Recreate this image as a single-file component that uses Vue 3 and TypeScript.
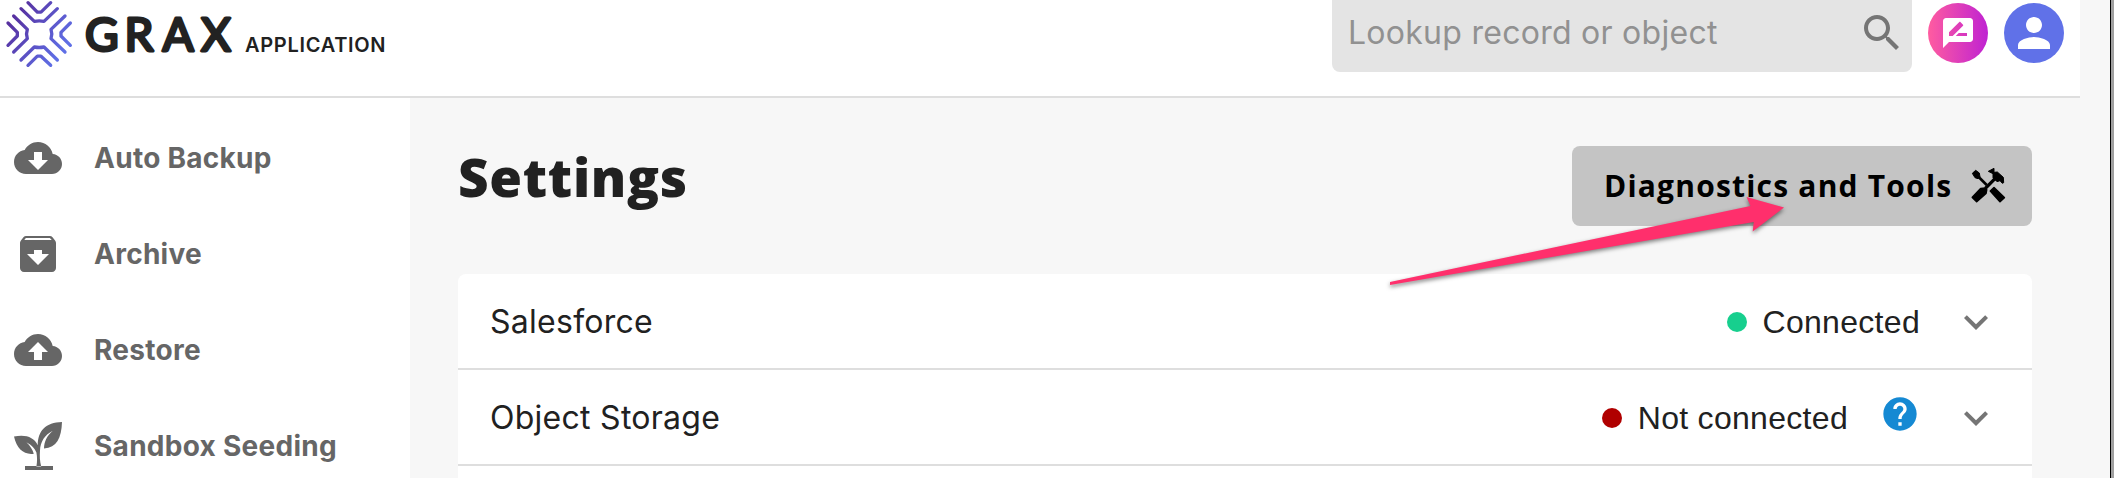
<script setup lang="ts">
interface NavItem {
  label: string
  icon: string
}
interface SettingRow {
  name: string
  status: string
  ok: boolean
  help: boolean
}

const CLOUD = 'M19.35 10.04C18.67 6.59 15.64 4 12 4 9.11 4 6.6 5.64 5.35 8.04 2.34 8.36 0 10.91 0 14c0 3.31 2.69 6 6 6h13c2.76 0 5-2.24 5-5 0-2.64-2.05-4.78-4.65-4.96z'

const navItems: NavItem[] = [
  { label: 'Auto Backup', icon: CLOUD + 'M12 18l-5-5h3V9h4v4h3l-5 5z' },
  {
    label: 'Archive',
    icon: 'M20.54 5.23l-1.39-1.68C18.88 3.21 18.47 3 18 3H6c-.47 0-.88.21-1.16.55L3.46 5.23C3.17 5.57 3 6.02 3 6.5V19c0 1.1.9 2 2 2h14c1.1 0 2-.9 2-2V6.5c0-.48-.17-.93-.46-1.27zM12 17.5L6.5 12H10v-2h4v2h3.5L12 17.5zM5.12 5l.81-1h12l.94 1H5.12z',
  },
  { label: 'Restore', icon: CLOUD + 'M12 8l5 5h-3v4h-4v-4H7l5-5z' },
  {
    label: 'Sandbox Seeding',
    icon: 'M5.5 22h14v2h-14zM11.2 22.2C11.7 19.5 11.6 17.3 11.2 15.2 10.3 13.2 9 11.6 6.2 10.1 8.2 12 9.3 13.8 9.9 15.9 5 16.6 1.4 13.5 0 7.3 5.8 6.1 10 7.6 11.9 11.6 11.8 4.6 15.8 .1 24 0 23.7 8.1 21.4 12.7 15 13.3 15.1 9.8 16.4 7 19.4 4.4 15.4 6.4 13.2 9.8 13 14.3 12.8 17.2 12.9 19.7 13.6 22.2z',
  },
]

const rows: SettingRow[] = [
  { name: 'Salesforce', status: 'Connected', ok: true, help: false },
  { name: 'Object Storage', status: 'Not connected', ok: false, help: true },
]
</script>

<template>
  <div class="window">
    <div class="app">
      <header class="topbar">
        <div class="brand">
          <svg class="mark" viewBox="0 0 240 225" fill="none" stroke="url(#brand-grad)" stroke-width="10" stroke-linecap="round" stroke-linejoin="round">
            <defs>
              <linearGradient id="brand-grad" gradientUnits="userSpaceOnUse" x1="40" y1="50" x2="190" y2="150">
                <stop offset="0" stop-color="#57309f" />
                <stop offset="1" stop-color="#5f6fe6" />
              </linearGradient>
            </defs>
            <path d="M84 8L112 36.500H123L152 8M63 26L103 64Q118 61 132 64L172 26" />
            <path d="M84 196L112 168.500H123L152 196M63 180L103 141Q118 144 132 141L172 180" />
            <path d="M24 69L52 97V108L24 136M41 48L82 88Q77 102 82 116L41 156" />
            <path d="M211 69L183 97V108L211 136M195 48L153 88Q158 102 153 116L195 156" />
          </svg>
          <svg class="wordmark" viewBox="80 0 160 75">
            <text x="85 124.500 162.500 201" y="51">GRAX</text>
          </svg>
          <span class="product">APPLICATION</span>
        </div>
        <div class="tools">
          <div class="search">
            <span class="placeholder">Lookup record or object</span>
            <svg class="i48" viewBox="0 0 24 24" fill="#757575"><path d="M15.500 14h-.79l-.28-.27C15.410 12.590 16 11.110 16 9.500 16 5.910 13.090 3 9.500 3S3 5.910 3 9.500 5.910 16 9.500 16c1.610 0 3.090-.59 4.230-1.570l.27.28v.79l5 4.990L20.490 19l-4.990-5zm-6 0C7.010 14 5 11.990 5 9.500S7.010 5 9.500 5 14 7.010 14 9.500 11.990 14 9.500 14z" /></svg>
          </div>
          <div class="round feedback">
            <svg class="i36" viewBox="0 0 24 24" fill="#fff"><path d="M20 2H4c-1.100 0-1.990.9-1.990 2L2 22l4-4h14c1.100 0 2-.9 2-2V4c0-1.100-.9-2-2-2zM6 14v-2.470l6.880-6.880c.2-.2.510-.2.710 0l1.770 1.770c.2.2.2.510 0 .710L8.470 14H6zm12 0h-7.500l2-2H18v2z" /></svg>
          </div>
          <div class="round account">
            <svg class="i48" viewBox="0 0 24 24" fill="#fff"><path d="M12 12c2.210 0 4-1.790 4-4s-1.790-4-4-4-4 1.790-4 4 1.790 4 4 4zm0 2c-2.670 0-8 1.340-8 4v2h16v-2c0-2.660-5.330-4-8-4z" /></svg>
          </div>
        </div>
      </header>

      <div class="body">
        <nav class="sidebar">
          <a v-for="item in navItems" :key="item.label" class="nav-item">
            <svg class="i48" viewBox="0 0 24 24" fill="#666"><path fill-rule="evenodd" :d="item.icon" /></svg>
            <span>{{ item.label }}</span>
          </a>
        </nav>

        <main class="content">
          <div class="heading">
            <h1>Settings</h1>
            <button class="diag" type="button">
              <span>Diagnostics and Tools</span>
              <svg class="i36" viewBox="30 36 108 108" fill="#000" stroke="#000" stroke-linejoin="round">
                <path stroke-width="3" d="M37 55L47 46L58 54L60 66L54 71L45 68Z" />
                <path stroke-width="8" d="M56 66L80 90" />
                <path stroke-width="10" d="M76 100L108 68" />
                <path stroke-width="5" d="M37 127L62 101L76 99L80 104L78 115L50 140Z" />
                <path stroke-width="5" d="M91 108L102 98L133 128L120 140Z" />
                <path stroke-width="3" d="M85 49L102 40V52L112 51L130 67L131 83L127 85L120 77L111 80L99 68V56Z" />
              </svg>
            </button>
          </div>

          <section class="card">
            <div v-for="row in rows" :key="row.name" class="row">
              <span class="name">{{ row.name }}</span>
              <span class="dot" :class="{ ok: row.ok }"></span>
              <span class="status">{{ row.status }}</span>
              <svg v-if="row.help" class="help" viewBox="0 0 24 24" fill="#1589d3"><path d="M12 2C6.480 2 2 6.480 2 12s4.480 10 10 10 10-4.480 10-10S17.520 2 12 2zm1 17h-2v-2h2v2zm2.070-7.750l-.9.920C13.450 12.900 13 13.500 13 15h-2v-.5c0-1.100.450-2.100 1.170-2.830l1.240-1.260c.370-.360.590-.860.590-1.410 0-1.100-.9-2-2-2s-2 .9-2 2H8c0-2.210 1.790-4 4-4s4 1.790 4 4c0 .88-.36 1.680-.93 2.250z" /></svg>
              <svg class="i48 chevron" viewBox="0 0 24 24" fill="#757575"><path d="M16.590 8.590L12 13.170 7.410 8.590 6 10l6 6 6-6z" /></svg>
            </div>
            <div class="row"></div>
          </section>
        </main>
      </div>
    </div>

    <svg class="pointer" viewBox="1380 190 420 110">
      <path fill="#ff2f6c" d="M1390 282L1750.500 206L1746.500 197L1784 207.500L1752.700 231.500L1753.700 222L1390 285Z" />
    </svg>
  </div>
</template>

<style>
body {
  margin: 0;
}
</style>

<style scoped>
.window {
  position: relative;
  box-sizing: border-box;
  width: 2114px;
  height: 478px;
  overflow: hidden;
  padding-right: 4px;
  background: linear-gradient(90deg, #000 0 1px, #a0a0a0 1px) right / 4px 100% no-repeat;
  font-family: Inter, "Liberation Sans", sans-serif;
  font-size: 32px;
  letter-spacing: 0.27px;
  color: #212121;
}
.app {
  height: 478px;
  background: #f7f7f7;
}
svg {
  display: block;
  flex: none;
}
.i48 {
  width: 48px;
  height: 48px;
}
.i36 {
  width: 36px;
  height: 36px;
}
.topbar {
  box-sizing: border-box;
  display: flex;
  justify-content: space-between;
  width: 2080px;
  height: 98px;
  padding-right: 16px;
  background: #fff;
  border-bottom: 2px solid #dedede;
}
.brand {
  display: flex;
}
.mark {
  width: 80px;
  height: 75px;
}
.wordmark {
  width: 160px;
  height: 75px;
}
.wordmark text {
  font-family: Lato, sans-serif;
  font-size: 46px;
  font-weight: 400;
  fill: #222;
  stroke: #222;
  stroke-width: 3px;
  stroke-linejoin: round;
}
.product {
  margin: 33px 0 0 5px;
  font-size: 20px;
  font-weight: 600;
  line-height: 24px;
  letter-spacing: 0.7px;
}
.tools {
  display: flex;
  gap: 16px;
}
.search {
  box-sizing: border-box;
  display: flex;
  justify-content: space-between;
  width: 580px;
  height: 72px;
  padding: 9px 6px 0 16px;
  border-radius: 0 0 8px 8px;
  background: #e4e4e4;
}
.placeholder {
  line-height: 48px;
  color: #919191;
}
.round {
  display: flex;
  align-items: center;
  justify-content: center;
  width: 60px;
  height: 60px;
  margin-top: 3px;
  border-radius: 50%;
}
.feedback {
  background: linear-gradient(90deg, #ff5ca0, #bf22d2);
}
.account {
  background: #6071e8;
}
.body {
  display: flex;
  height: 380px;
}
.sidebar {
  box-sizing: border-box;
  width: 410px;
  padding: 12px 14px;
  background: #fff;
}
.nav-item {
  display: flex;
  align-items: center;
  gap: 32px;
  height: 96px;
  font-size: 28px;
  font-weight: 700;
  color: #666;
}
.content {
  width: 1574px;
  padding: 48px 0 0 48px;
}
.heading {
  display: flex;
  justify-content: space-between;
  height: 128px;
}
h1 {
  margin: -1px 0 0;
  font: 800 53px/64px "Open Sans", sans-serif;
  letter-spacing: 0.7px;
}
.diag {
  box-sizing: border-box;
  display: flex;
  align-items: center;
  justify-content: space-between;
  width: 460px;
  height: 80px;
  padding: 0 26px 0 32px;
  border: 0;
  border-radius: 8px;
  background: #c4c4c4;
  font: 700 30px/40px "Open Sans", sans-serif;
  letter-spacing: 1.2px;
  color: #000;
}
.diag svg {
  margin-top: -2px;
}
.card {
  border-radius: 8px 8px 0 0;
  background: #fff;
}
.row {
  box-sizing: border-box;
  display: flex;
  align-items: center;
  height: 96px;
  padding: 2px 32px 0;
  border-bottom: 2px solid #dedede;
}
.name {
  flex: 1;
  margin-top: -2px;
}
.dot {
  width: 20px;
  height: 20px;
  margin-right: 16px;
  border-radius: 50%;
  background: #b00000;
}
.dot.ok {
  background: #17cf8e;
}
.status {
  font-family: "Liberation Sans", Arial, sans-serif;
  letter-spacing: 0.3px;
}
.help {
  width: 40px;
  height: 40px;
  margin: -8px 0 0 32px;
}
.chevron {
  margin-left: 32px;
}
.pointer {
  position: absolute;
  left: 1380px;
  top: 190px;
  width: 420px;
  height: 110px;
  filter: drop-shadow(0 2px 2px rgba(0, 0, 0, 0.5));
}
</style>
